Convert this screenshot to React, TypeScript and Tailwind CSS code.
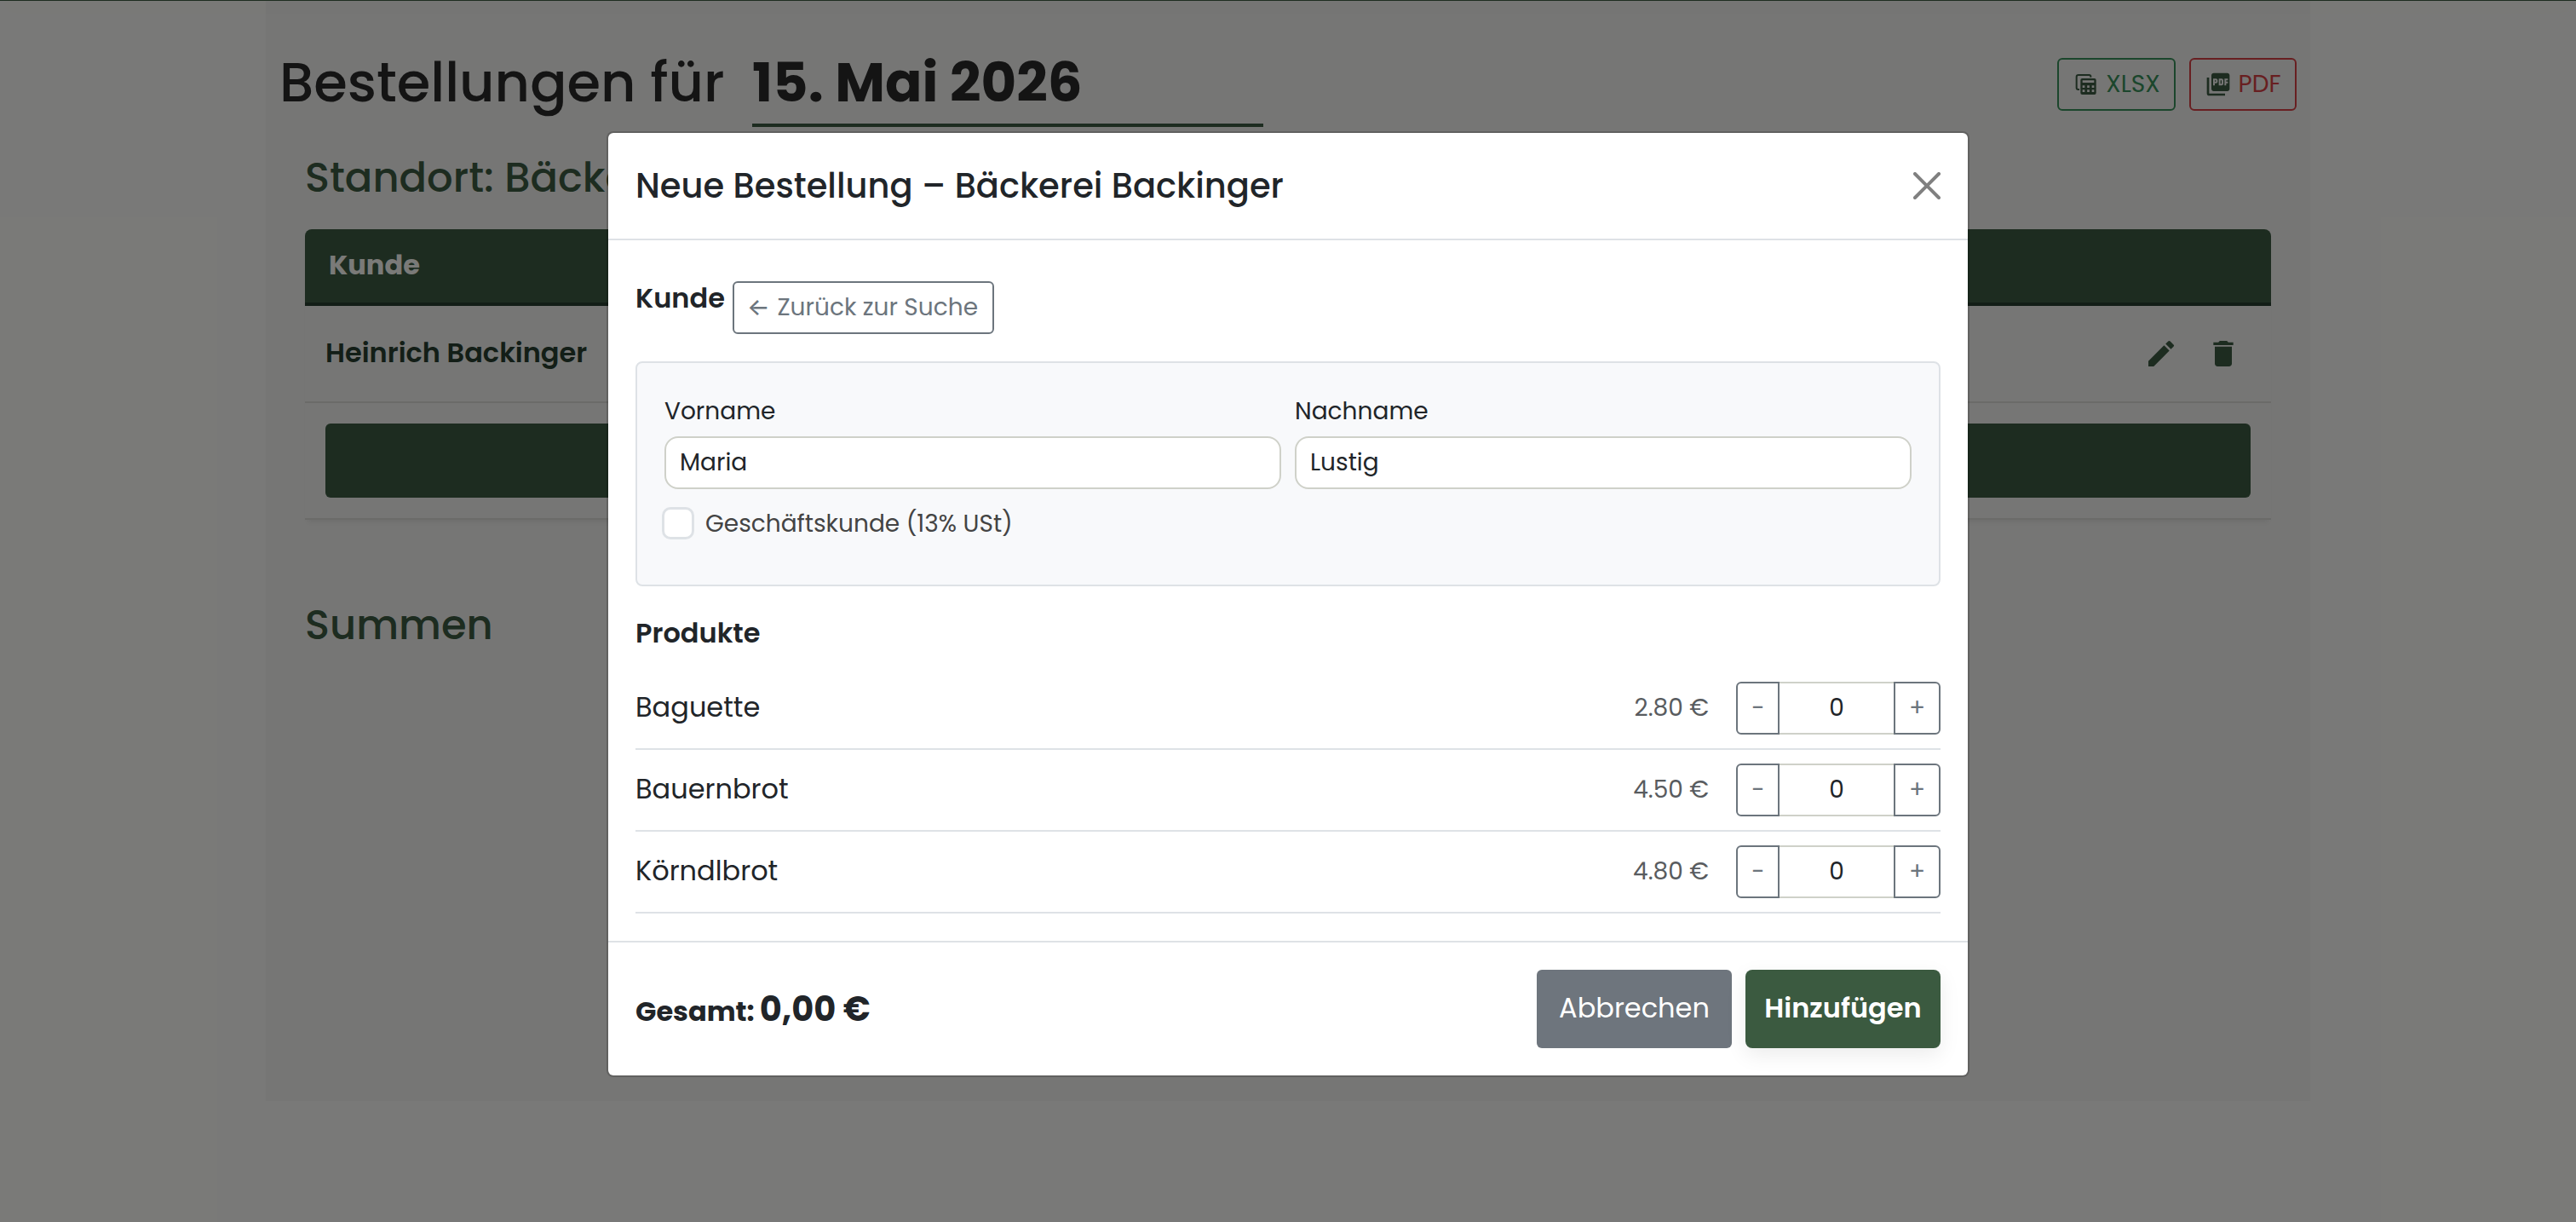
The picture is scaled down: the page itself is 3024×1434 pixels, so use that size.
import { useState } from 'react';
import { MdDelete, MdEdit, MdPictureAsPdf } from 'react-icons/md';

interface Product {
  name: string;
  price: number;
}

const PRODUCTS: Product[] = [
  { name: 'Baguette', price: 2.8 },
  { name: 'Bauernbrot', price: 4.5 },
  { name: 'Körndlbrot', price: 4.8 },
];

function SheetIcon() {
  return (
    <svg viewBox="0 0 96 96" className="size-8 text-[#3a5840]">
      <path
        d="M24 66H20Q14 66 14 60V22Q14 15 21 15H58Q64 15 64 20V23"
        fill="none"
        stroke="currentColor"
        strokeWidth="6"
      />
      <path
        fill="currentColor"
        fillRule="evenodd"
        d="M34 27H77Q83 27 83 33V78Q83 84 77 84H34Q28 84 28 78V33Q28 27 34 27ZM35 34V42H76V34ZM35 52V60H43V52ZM51.500 52V60H59.500V52ZM68 52V60H76V52ZM35 67V75H43V67ZM51.500 67V75H59.500V67ZM68 67V75H76V67Z"
      />
    </svg>
  );
}

function CloseIcon() {
  return (
    <svg viewBox="0 0 16 16" className="size-8" fill="#808080">
      <path d="M.293.293a1 1 0 0 1 1.414 0L8 6.586 14.293.293a1 1 0 1 1 1.414 1.414L9.414 8l6.293 6.293a1 1 0 0 1-1.414 1.414L8 9.414l-6.293 6.293a1 1 0 0 1-1.414-1.414L6.586 8 .293 1.707a1 1 0 0 1 0-1.414z" />
    </svg>
  );
}

function OrdersPage() {
  return (
    <div className="h-[1434px] overflow-hidden bg-[#f3f3f0]">
      {/* Lower edge of the navbar */}
      <div className="relative h-px bg-[#3a5840] shadow-[0_4px_24px_rgba(0,0,0,0.15)]" />

      <main className="mx-auto h-[1291px] w-[2400px] bg-[#ececea] px-4 pt-[47px]">
        <div className="flex h-[101px] items-start">
          <h1 className="w-[555px] text-[64px] leading-[97px] font-medium whitespace-nowrap text-[#282828]">
            Bestellungen für
          </h1>
          <div className="w-[600px] border-b-4 border-[#3a5840] text-[64px] leading-[97px] font-bold text-[#282828]">
            15. Mai 2026
          </div>
          <div className="mt-5 ml-auto flex gap-4">
            <button className="flex h-[62px] w-[139px] items-center justify-center gap-[7px] rounded-md border-2 border-[#378c58] text-[28px] text-[#378c58]">
              <SheetIcon />
              XLSX
            </button>
            <button className="flex h-[62px] w-[126px] items-center justify-center gap-[7px] rounded-md border-2 border-[#d03e42] text-[28px] text-[#d03e42]">
              <MdPictureAsPdf className="size-8 text-[#3a5840]" />
              PDF
            </button>
          </div>
        </div>

        <div className="px-[30px]">
          <h2 className="mt-[31px] mb-[31px] text-[48px] leading-[58px] font-medium text-[#3a5840]">
            Standort: Bäckerei Backinger
          </h2>

          <div className="rounded-t-lg shadow-[0_6px_6px_-4px_rgba(0,0,0,0.08)]">
            <div className="h-[90px] rounded-t-lg border-b-4 border-[#263c2e] bg-[#3a5840] px-7 text-[32px] leading-[84px] font-bold text-[#f4f4f0]">
              Kunde
            </div>
            <div className="flex h-[114px] justify-between border-b-2 border-[#d6d6d2] bg-[#ececea] pr-9 pl-6">
              <span className="text-[32px] leading-[110px] font-semibold text-[#263c2e]">Heinrich Backinger</span>
              <div className="flex gap-[33px] pt-9 text-[40px] text-[#3a5840]">
                <MdEdit />
                <MdDelete />
              </div>
            </div>
            <div className="border-b-2 border-[#d6d6d2] bg-[#ececea] p-6">
              <div className="h-[87px] rounded-md bg-[#3a5840]" />
            </div>
          </div>

          <h2 className="mt-[95px] text-[48px] leading-[58px] font-medium text-[#3a5840]">Summen</h2>
        </div>
      </main>
    </div>
  );
}

function TextField({ label, value }: { label: string; value: string }) {
  return (
    <label className="flex-1 text-[28px] leading-[50px]">
      {label}
      <input
        defaultValue={value}
        className="mt-1 block h-[62px] w-full rounded-2xl border-2 border-[#cfd1c9] bg-white px-4 outline-none"
      />
    </label>
  );
}

interface ProductRowProps {
  product: Product;
  count: number;
  onChange: (count: number) => void;
}

function ProductRow({ product, count, onChange }: ProductRowProps) {
  return (
    <div className="flex h-24 items-center border-b-2 border-[#dee2e6]">
      <span className="flex-1 pb-0.5 text-[32px]">{product.name}</span>
      <span className="mr-8 text-[28px] text-[#595c5f]">{product.price.toFixed(2)} €</span>
      <div className="flex h-[62px] w-60 text-[28px] leading-[58px]">
        <button
          onClick={() => onChange(Math.max(0, count - 1))}
          className="w-[51px] rounded-l-md border-2 border-[#6c757d] pl-px text-[#6c757d]"
        >
          -
        </button>
        <span className="flex-1 border-y-2 border-[#cfd1c9] text-center">{count}</span>
        <button
          onClick={() => onChange(count + 1)}
          className="w-[55px] rounded-r-md border-2 border-[#6c757d] text-[#6c757d]"
        >
          +
        </button>
      </div>
    </div>
  );
}

function NewOrderModal() {
  const [counts, setCounts] = useState<number[]>(PRODUCTS.map(() => 0));

  const total = PRODUCTS.reduce((sum, product, i) => sum + product.price * counts[i], 0);

  const setCount = (index: number, count: number) => {
    setCounts(counts.map((c, i) => (i === index ? count : c)));
  };

  return (
    <div className="w-[1600px] rounded-lg border-2 border-black/[0.175] bg-white bg-clip-padding text-[#212529]">
      <div className="flex h-[126px] items-center justify-between border-b-2 border-[#dee2e6] px-8">
        <h5 className="text-[40px] leading-[60px] font-medium">Neue Bestellung – Bäckerei Backinger</h5>
        <button aria-label="Schließen">
          <CloseIcon />
        </button>
      </div>

      <div className="px-8 pt-12 pb-8">
        {/* Customer */}
        <div className="flex items-start">
          <span className="w-[114px] text-[32px] leading-10 font-semibold">Kunde</span>
          <button className="flex h-[62px] w-[307px] items-center justify-between rounded-md border-2 border-[#6c757d] pr-[17px] pl-[15px] text-[28px] leading-[58px] whitespace-nowrap text-[#6c757d]">
            <span className="pb-0.5 font-['Inter',sans-serif] leading-8 font-medium">←</span>
            <span>Zurück zur Suche</span>
          </button>
        </div>
        <div className="mt-8 h-[264px] rounded-lg border-2 border-[#dee2e6] bg-[#f8f9fb] p-8">
          <div className="flex gap-4">
            <TextField label="Vorname" value="Maria" />
            <TextField label="Nachname" value="Lustig" />
          </div>
          <label className="mt-[21px] -ml-[3px] flex h-[38px] items-center gap-[13px] text-[28px] leading-10 text-[#444444]">
            <input
              type="checkbox"
              className="size-[38px] appearance-none rounded-[10px] border-[3px] border-[#dee2e6] bg-white"
            />
            <span className="pt-0.5">Geschäftskunde (13% USt)</span>
          </label>
        </div>

        {/* Products */}
        <h6 className="mt-[35px] mb-[21px] text-[32px] leading-10 font-semibold">Produkte</h6>
        {PRODUCTS.map((product, i) => (
          <ProductRow
            key={product.name}
            product={product}
            count={counts[i]}
            onChange={(count) => setCount(i, count)}
          />
        ))}
      </div>

      <div className="flex h-[158px] items-center gap-4 border-t-2 border-[#dee2e6] px-8">
        <div className="mr-auto flex items-baseline gap-1.5 text-[32px] font-bold">
          Gesamt:
          <span className="text-[40px] leading-[60px]">{total.toFixed(2).replace('.', ',')} €</span>
        </div>
        <button className="h-[92px] w-[229px] rounded-md bg-[#6e757d] pb-0.5 text-[32px] text-white">
          Abbrechen
        </button>
        <button className="h-[92px] w-[229px] rounded-lg bg-[#3b5a40] pb-0.5 text-[32px] font-semibold text-white shadow-[0_8px_24px_rgba(0,0,0,0.08)]">
          Hinzufügen
        </button>
      </div>
    </div>
  );
}

export default function App() {
  return (
    <div className="relative h-[1434px] overflow-hidden font-['Poppins','Inter',sans-serif]">
      <OrdersPage />
      <div className="absolute inset-0 flex items-start justify-center bg-black/50 pt-[154px]">
        <NewOrderModal />
      </div>
    </div>
  );
}
